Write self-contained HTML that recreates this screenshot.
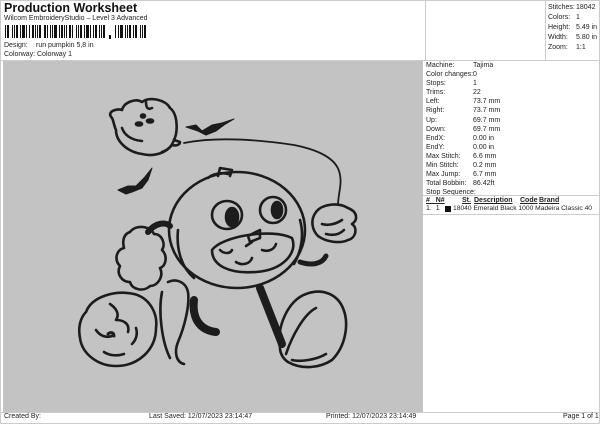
<!DOCTYPE html>
<html><head><meta charset="utf-8"><style>
*{margin:0;padding:0;box-sizing:border-box}
body{width:600px;height:424px;background:#fff;font-family:"Liberation Sans",Arial,sans-serif;position:relative;overflow:hidden;color:#222}
.a{position:absolute;white-space:nowrap}
.s{font-size:7px}
</style></head><body>
<div class="a" style="left:0;top:0;width:600px;height:424px;border:1px solid #ccc"></div>
<div class="a" style="left:4px;top:1px;font-size:12.5px;font-weight:bold;color:#111">Production Worksheet</div>
<div class="a s" style="left:4px;top:15px">Wilcom EmbroideryStudio – Level 3 Advanced</div>
<svg class="a" style="left:5px;top:25px" width="142" height="14">
<g fill="#111" id="bc"></g>
</svg>
<div class="a s" style="left:4px;top:42px">Design:</div>
<div class="a s" style="left:36px;top:42px">run pumpkin 5,8 in</div>
<div class="a s" style="left:4px;top:51px">Colorway:</div>
<div class="a s" style="left:37px;top:51px">Colorway 1</div>

<div class="a" style="left:425px;top:0;width:1px;height:60px;background:#ccc"></div>
<div class="a" style="left:545px;top:0;width:1px;height:60px;background:#ccc"></div>
<div class="a s" style="left:548px;top:3px;line-height:10px">Stitches:<br>Colors:<br>Height:<br>Width:<br>Zoom:</div>
<div class="a s" style="left:576px;top:3px;line-height:10px">18042<br>1<br>5.49 in<br>5.80 in<br>1:1</div>

<div class="a" style="left:3px;top:60px;width:420px;height:352px;background:#c3c3c3"></div>
<div class="a" style="left:0;top:60px;width:600px;height:1px;background:#ccc"></div>

<div class="a s" style="left:426px;top:61px;line-height:9.1px">Machine:<br>Color changes:<br>Stops:<br>Trims:<br>Left:<br>Right:<br>Up:<br>Down:<br>EndX:<br>EndY:<br>Max Stitch:<br>Min Stitch:<br>Max Jump:<br>Total Bobbin:<br>Stop Sequence:</div>
<div class="a s" style="left:473px;top:61px;line-height:9.1px">Tajima<br>0<br>1<br>22<br>73.7 mm<br>73.7 mm<br>69.7 mm<br>69.7 mm<br>0.00 in<br>0.00 in<br>6.6 mm<br>0.2 mm<br>6.7 mm<br>86.42ft</div>
<div class="a" style="left:423px;top:195px;width:176px;height:1px;background:#ccc"></div>
<div class="a s" style="left:426px;top:197px;font-weight:bold;text-decoration:underline">#&nbsp;&nbsp; N#</div>
<div class="a s" style="left:462px;top:197px;font-weight:bold;text-decoration:underline">St.</div>
<div class="a s" style="left:474px;top:197px;font-weight:bold;text-decoration:underline">Description</div>
<div class="a s" style="left:520px;top:197px;font-weight:bold;text-decoration:underline">Code</div>
<div class="a s" style="left:539px;top:197px;font-weight:bold;text-decoration:underline">Brand</div>
<div class="a s" style="left:426px;top:205px">1.&nbsp; 1</div>
<div class="a" style="left:445px;top:206px;width:6px;height:6px;background:#111"></div>
<div class="a s" style="left:453px;top:205px;font-size:6.7px">18040 Emerald Black 1000 Madeira Classic 40</div>
<div class="a" style="left:423px;top:214px;width:176px;height:1px;background:#ccc"></div>

<div class="a" style="left:0;top:412px;width:600px;height:1px;background:#ccc"></div>
<div class="a s" style="left:4px;top:413px">Created By:</div>
<div class="a s" style="left:149px;top:413px">Last Saved: 12/07/2023 23:14:47</div>
<div class="a s" style="left:326px;top:413px">Printed: 12/07/2023 23:14:49</div>
<div class="a s" style="left:563px;top:413px">Page 1 of 1</div>

<svg class="a" style="left:0;top:0" width="600" height="424" fill="none" stroke="#1c1c1c" stroke-width="2.6" stroke-linecap="round" stroke-linejoin="round">
<path d="M112 118c-6-6 4-10 10-8 2-8 14-12 20-8 8-6 24-2 28 6 8 6 8 24 4 32l6 2c0 3-4 4-8 3-6 8-18 12-30 9-14-2-26-12-26-24-2-4-2-8-4-12z"/>
<path d="M146 102c0 6 2 8 6 6M122 128c2 6 8 12 20 13M162 152c6-2 10-6 12-12"/>
<ellipse cx="143" cy="116" rx="2" ry="1.5" fill="#1c1c1c"/><ellipse cx="139" cy="124" rx="3" ry="1.5" fill="#1c1c1c"/><ellipse cx="150" cy="121" rx="3" ry="1.5" fill="#1c1c1c"/>
<path d="M184 143c30-6 70-4 110 2 30 6 44 16 46 30 2 10-2 20-2 30" stroke-width="1.8"/>
<path d="M186 127l10-2 6 6 10-6 10-2 12-4-10 6-8 6-10 4-8-4z" fill="#1c1c1c" stroke-width="1"/>
<path d="M118 190l10-4 8 0 8-8 8-10-4 12-6 8-10 4-6 2z" fill="#1c1c1c" stroke-width="1"/>
<path d="M148 232c8-10 18-10 22-6" stroke-width="6"/>
<path d="M130 232c6-8 20-6 24 2 8 0 12 10 8 16 6 6 4 16-2 18 4 8-2 18-10 18-6 6-18 4-20-4-8 0-14-8-10-16-6-6-4-16 4-18-2-8 0-14 6-16z"/>
<ellipse cx="237" cy="230" rx="68" ry="58"/>
<path d="M208 178c4-4 14-6 20-4M218 176l2-8 12 2-2 6M178 230c-2 20 4 38 16 48M300 220c4 14 2 30-6 44"/>
<ellipse cx="227" cy="215" rx="15" ry="14"/><ellipse cx="232" cy="217" rx="6" ry="9" fill="#1c1c1c"/>
<ellipse cx="273" cy="210" rx="13" ry="13"/><ellipse cx="277" cy="210" rx="5" ry="8" fill="#1c1c1c"/>
<path d="M248 236l12-6 0 8-10 4z"/>
<path d="M212 250c10-14 60-22 80-12 6 14-8 32-36 34-26 2-44-6-44-22z"/>
<path d="M220 250c4 4 10 4 12 0M236 262c6 4 14 2 16-4M262 250c6 2 12 0 14-6M246 246l6-4"/>
<path d="M300 262c12 4 22 2 26-6" stroke-width="5"/>
<path d="M316 212c6-8 22-10 32-4 10 4 10 12 4 16 6 4 4 14-4 16-8 4-22 2-30-4-6-6-8-16-2-24z"/>
<path d="M322 224c6 2 14 0 20-4M326 234c8 2 14 0 18-4"/>
<path d="M260 288l22 56" stroke-width="8"/>
<path d="M280 348c-4-20 8-48 26-54 16-6 30 0 36 12 8 16 4 40-10 54-12 8-30 10-44 2-6-4-8-10-8-14z"/>
<path d="M286 354c6-18 18-40 30-46M292 360c8 2 24 0 34-6"/>
<path d="M194 300c-2 16 4 30 22 32" stroke-width="8"/>
<path d="M168 282c8-4 18 0 20 10 2 14-4 36-10 50-4 10-2 20 6 22M162 292c-4 20 0 50 8 66"/>
<path d="M86 312c6-16 30-22 48-18 16 4 24 20 22 34 0 22-18 38-40 38-18 0-34-12-36-28-2-10 0-20 6-26z"/>
<path d="M110 304c6 4 10 10 6 16 8 0 14 4 12 12M96 330c4 6 10 8 16 6M132 344c4-4 6-10 4-16M104 352c6 4 14 4 20 2"/>
<path d="M108 334c2-2 6-2 6 2" stroke-width="3"/>
</svg>
<script>
var g=document.getElementById('bc'),x=0,w=[1,2,1,1,2,1,3,1,1,2,1,1,2,2,1,1,1,3,1,2,1,1,2,1,1,1,2,1,3,1,1,2,1,1,2,1,2,1,1,1,3,1,1,2];
var i=0;while(x<140){var bw=w[i%w.length],sp=w[(i+5)%w.length];if(x<100||x>108){var r=document.createElementNS('http://www.w3.org/2000/svg','rect');r.setAttribute('x',x);r.setAttribute('y',0);r.setAttribute('width',bw);r.setAttribute('height',13);g.appendChild(r);}x+=bw+sp;i++;}
var c=document.createElementNS('http://www.w3.org/2000/svg','rect');c.setAttribute('x',104);c.setAttribute('y',10);c.setAttribute('width',2);c.setAttribute('height',4);g.appendChild(c);
</script>
</body></html>
